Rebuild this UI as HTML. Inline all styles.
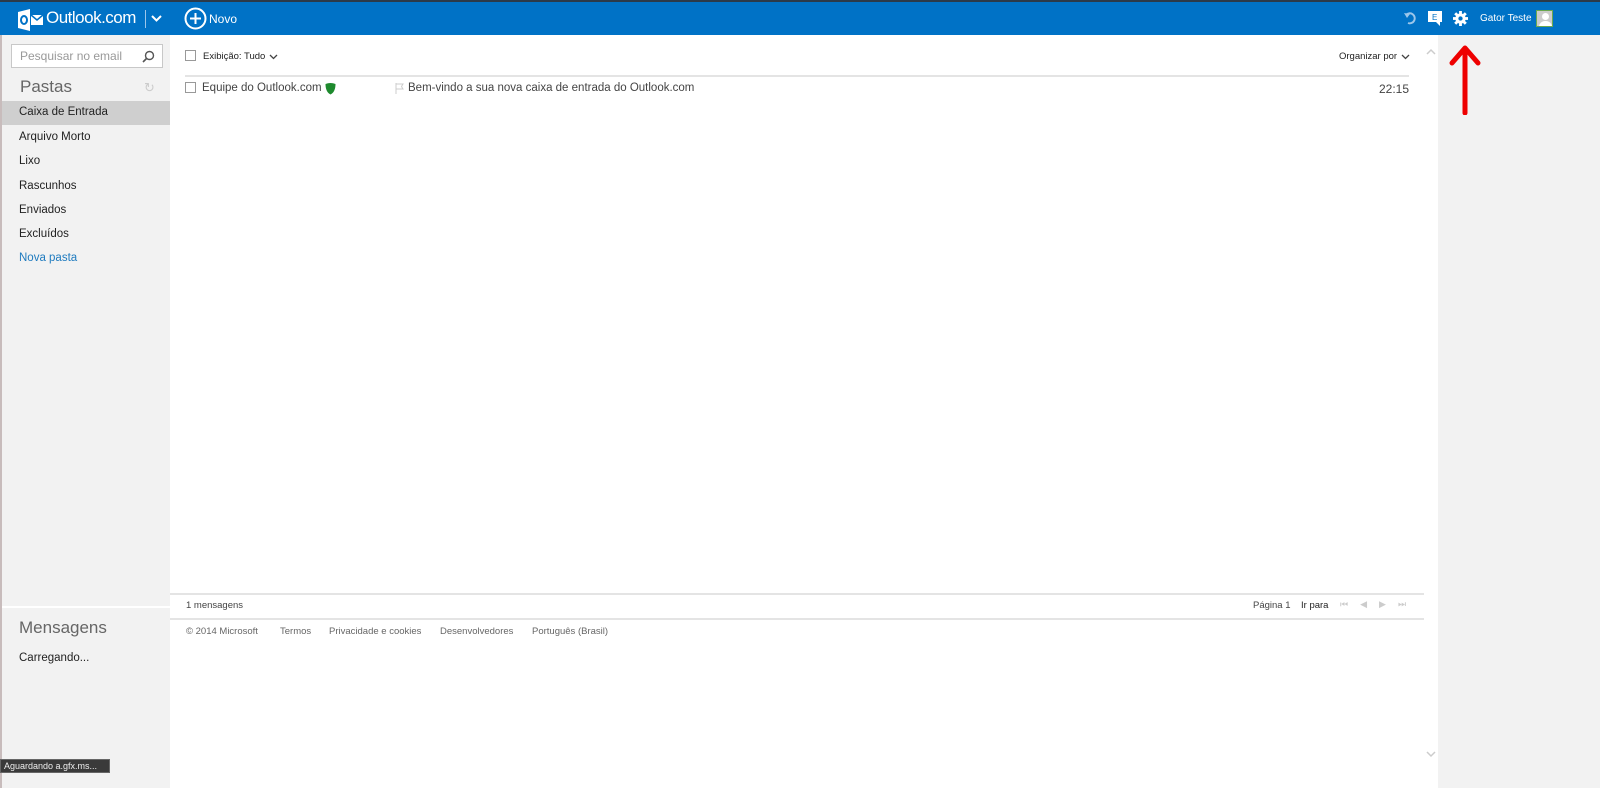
<!DOCTYPE html>
<html><head><meta charset="utf-8"><style>
*{margin:0;padding:0;box-sizing:border-box}
body{width:1600px;height:788px;overflow:hidden;font-family:"Liberation Sans","DejaVu Sans",sans-serif;background:#fff;position:relative;color:#333}
.abs{position:absolute;white-space:nowrap}
#top{left:0;top:0;width:1600px;height:2px;background:#2b3a4a}
#bar{left:0;top:2px;width:1600px;height:33px;background:#0072c6;color:#fff}
#side{left:0;top:35px;width:170px;height:753px;background:#f2f2f2;border-left:2px solid #c8bcbc}
#right{left:1438px;top:35px;width:162px;height:753px;background:#f2f2f2}
.f{position:absolute;left:19px;font-size:11.5px;color:#222;white-space:nowrap}
.sm{font-size:9.5px;color:#444}
.line{position:absolute;height:2px;background:#e4e4e4}
.cb{position:absolute;width:11px;height:11px;border:1px solid #999;background:#fff}
</style></head><body>
<div class="abs" id="top"></div>
<div class="abs" id="bar">
  <svg class="abs" style="left:18px;top:7px" width="26" height="22" viewBox="0 0 26 22"><path d="M0 3 L12 0 L12 22 L0 19Z" fill="#fff"/><ellipse cx="6" cy="11" rx="3" ry="4" fill="none" stroke="#0072c6" stroke-width="2"/><rect x="13" y="6" width="12" height="10" fill="#fff"/><path d="M13 6 L19 11 L25 6" fill="none" stroke="#0072c6" stroke-width="1.5"/></svg>
  <div class="abs" style="left:46px;top:6px;font-size:17px;letter-spacing:-0.5px">Outlook.com</div>
  <div class="abs" style="left:145px;top:8px;width:1px;height:18px;background:#9cc6ea"></div>
  <svg class="abs" style="left:151px;top:13px" width="11" height="8"><path d="M1 1 L5.5 5.5 L10 1" stroke="#fff" stroke-width="2" fill="none"/></svg>
  <svg class="abs" style="left:184px;top:5px" width="23" height="23"><circle cx="11.5" cy="11.5" r="10" stroke="#fff" stroke-width="2" fill="none"/><path d="M11.5 6v11M6 11.5h11" stroke="#fff" stroke-width="2"/></svg>
  <div class="abs" style="left:209px;top:10px;font-size:12px">Novo</div>
  <svg class="abs" style="left:1403px;top:9px" width="14" height="14"><path d="M3 4 A5 5 0 1 1 5 12" stroke="#9cc6ea" stroke-width="2" fill="none"/><path d="M1 2 L4 7 L7 3Z" fill="#9cc6ea"/></svg>
  <svg class="abs" style="left:1428px;top:9px" width="16" height="15"><rect x="0" y="0" width="14" height="11" fill="#fff"/><path d="M8 11 L12 15 L12 11Z" fill="#fff"/><text x="4" y="9" font-size="8" fill="#0072c6" font-family="Liberation Sans">E</text></svg>
  <svg class="abs" style="left:1453px;top:9px" width="15" height="15" viewBox="0 0 16 16"><g fill="#fff"><circle cx="8" cy="8" r="5.5"/><rect x="6.5" y="0" width="3" height="16"/><rect x="0" y="6.5" width="16" height="3"/><rect x="6.5" y="0" width="3" height="16" transform="rotate(45 8 8)"/><rect x="6.5" y="0" width="3" height="16" transform="rotate(-45 8 8)"/></g><circle cx="8" cy="8" r="2.3" fill="#0072c6"/></svg>
  <div class="abs" style="left:1480px;top:11px;font-size:10px">Gator Teste</div>
  <div class="abs" style="left:1536px;top:8px;width:17px;height:17px;background:#ccc;border:1px solid #6aa84f;overflow:hidden"><div class="abs" style="left:5px;top:2px;width:7px;height:7px;border-radius:50%;background:#fff"></div><div class="abs" style="left:2px;top:10px;width:13px;height:8px;border-radius:6px 6px 0 0;background:#fff"></div></div>
</div>
<div class="abs" id="side">
  <div class="abs" style="left:9px;top:9px;width:152px;height:24px;background:#fff;border:1px solid #c8c8c8"></div>
  <div class="abs" style="left:18px;top:14px;font-size:12px;color:#999">Pesquisar no email</div>
  <svg class="abs" style="left:140px;top:15px" width="13" height="13"><circle cx="7.5" cy="5.5" r="4" stroke="#555" stroke-width="1.4" fill="none"/><path d="M4.5 8.5 L1 12" stroke="#555" stroke-width="1.6"/></svg>
  <div class="abs" style="left:18px;top:42px;font-size:17px;color:#666">Pastas</div>
  <div class="abs" style="left:142px;top:45px;font-size:13px;color:#ccc">↻</div>
  <div class="abs" style="left:0;top:66px;width:168px;height:24px;background:#cfcfcf"></div>
  <div class="f" style="left:17px;top:71px">Caixa de Entrada</div>
  <div class="f" style="left:17px;top:96px">Arquivo Morto</div>
  <div class="f" style="left:17px;top:120px">Lixo</div>
  <div class="f" style="left:17px;top:145px">Rascunhos</div>
  <div class="f" style="left:17px;top:169px">Enviados</div>
  <div class="f" style="left:17px;top:193px">Excluídos</div>
  <div class="f" style="left:17px;top:217px;color:#1f7bbf">Nova pasta</div>
  <div class="abs" style="left:0;top:571px;width:168px;height:2px;background:#fff"></div>
  <div class="abs" style="left:17px;top:583px;font-size:17px;color:#666">Mensagens</div>
  <div class="f" style="left:17px;top:617px">Carregando...</div>
</div>
<div class="abs" style="left:0;top:759px;width:110px;height:14px;background:#3a3a3a;color:#eee;font-size:9px;padding:1px 3px;border:1px solid #666;overflow:hidden">Aguardando a.gfx.ms...</div>
<div class="abs" id="right"></div>
<div class="abs" style="left:1424px;top:35px;width:14px;height:753px;background:#fff"></div>
<svg class="abs" style="left:1426px;top:48px" width="10" height="7"><path d="M1 6 L5 2 L9 6" stroke="#ccc" stroke-width="1.5" fill="none"/></svg>
<svg class="abs" style="left:1426px;top:751px" width="10" height="7"><path d="M1 1 L5 5 L9 1" stroke="#ccc" stroke-width="1.5" fill="none"/></svg>
<svg class="abs" style="left:1447px;top:43px" width="36" height="72"><path d="M18 70 V6 M5 20 L18 5 L31 20" stroke="#ee0000" stroke-width="5" stroke-linecap="round" stroke-linejoin="round" fill="none"/></svg>
<div class="cb" style="left:185px;top:50px"></div>
<div class="abs sm" style="left:203px;top:51px;color:#222">Exibição: Tudo</div>
<svg class="abs" style="left:269px;top:54px" width="9" height="6"><path d="M1 1 L4.5 4.5 L8 1" stroke="#444" stroke-width="1.3" fill="none"/></svg>
<div class="abs sm" style="left:1339px;top:51px;color:#222">Organizar por</div>
<svg class="abs" style="left:1401px;top:54px" width="9" height="6"><path d="M1 1 L4.5 4.5 L8 1" stroke="#444" stroke-width="1.3" fill="none"/></svg>
<div class="line" style="left:185px;top:75px;width:1224px"></div>
<div class="cb" style="left:185px;top:82px"></div>
<div class="abs" style="left:202px;top:82px;font-size:11.5px;color:#444">Equipe do Outlook.com</div>
<svg class="abs" style="left:325px;top:83px" width="11" height="12"><path d="M0.5 1 Q5.5 -1 10.5 1 Q10.5 9 5.5 11.5 Q0.5 9 0.5 1Z" fill="#1e8a2e"/></svg>
<svg class="abs" style="left:395px;top:83px" width="9" height="11"><path d="M1 0 V11 M1 1 H8 L6.5 3.5 L8 6 H1" stroke="#ccc" fill="none"/></svg>
<div class="abs" style="left:408px;top:82px;font-size:11.5px;color:#444">Bem-vindo a sua nova caixa de entrada do Outlook.com</div>
<div class="abs" style="left:1379px;top:82px;font-size:12px;color:#444">22:15</div>
<div class="line" style="left:170px;top:593px;width:1254px"></div>
<div class="abs sm" style="left:186px;top:600px">1 mensagens</div>
<div class="abs sm" style="left:1253px;top:600px">Página 1</div>
<div class="abs sm" style="left:1301px;top:600px;color:#222">Ir para</div>
<div class="abs" style="left:1340px;top:599px;font-size:9px;color:#ccc;letter-spacing:12px">⏮◀▶⏭</div>
<div class="line" style="left:170px;top:618px;width:1254px"></div>
<div class="abs sm" style="left:186px;top:626px;color:#666">© 2014 Microsoft</div>
<div class="abs sm" style="left:280px;top:626px;color:#666">Termos</div>
<div class="abs sm" style="left:329px;top:626px;color:#666">Privacidade e cookies</div>
<div class="abs sm" style="left:440px;top:626px;color:#666">Desenvolvedores</div>
<div class="abs sm" style="left:532px;top:626px;color:#666">Português (Brasil)</div>
</body></html>
